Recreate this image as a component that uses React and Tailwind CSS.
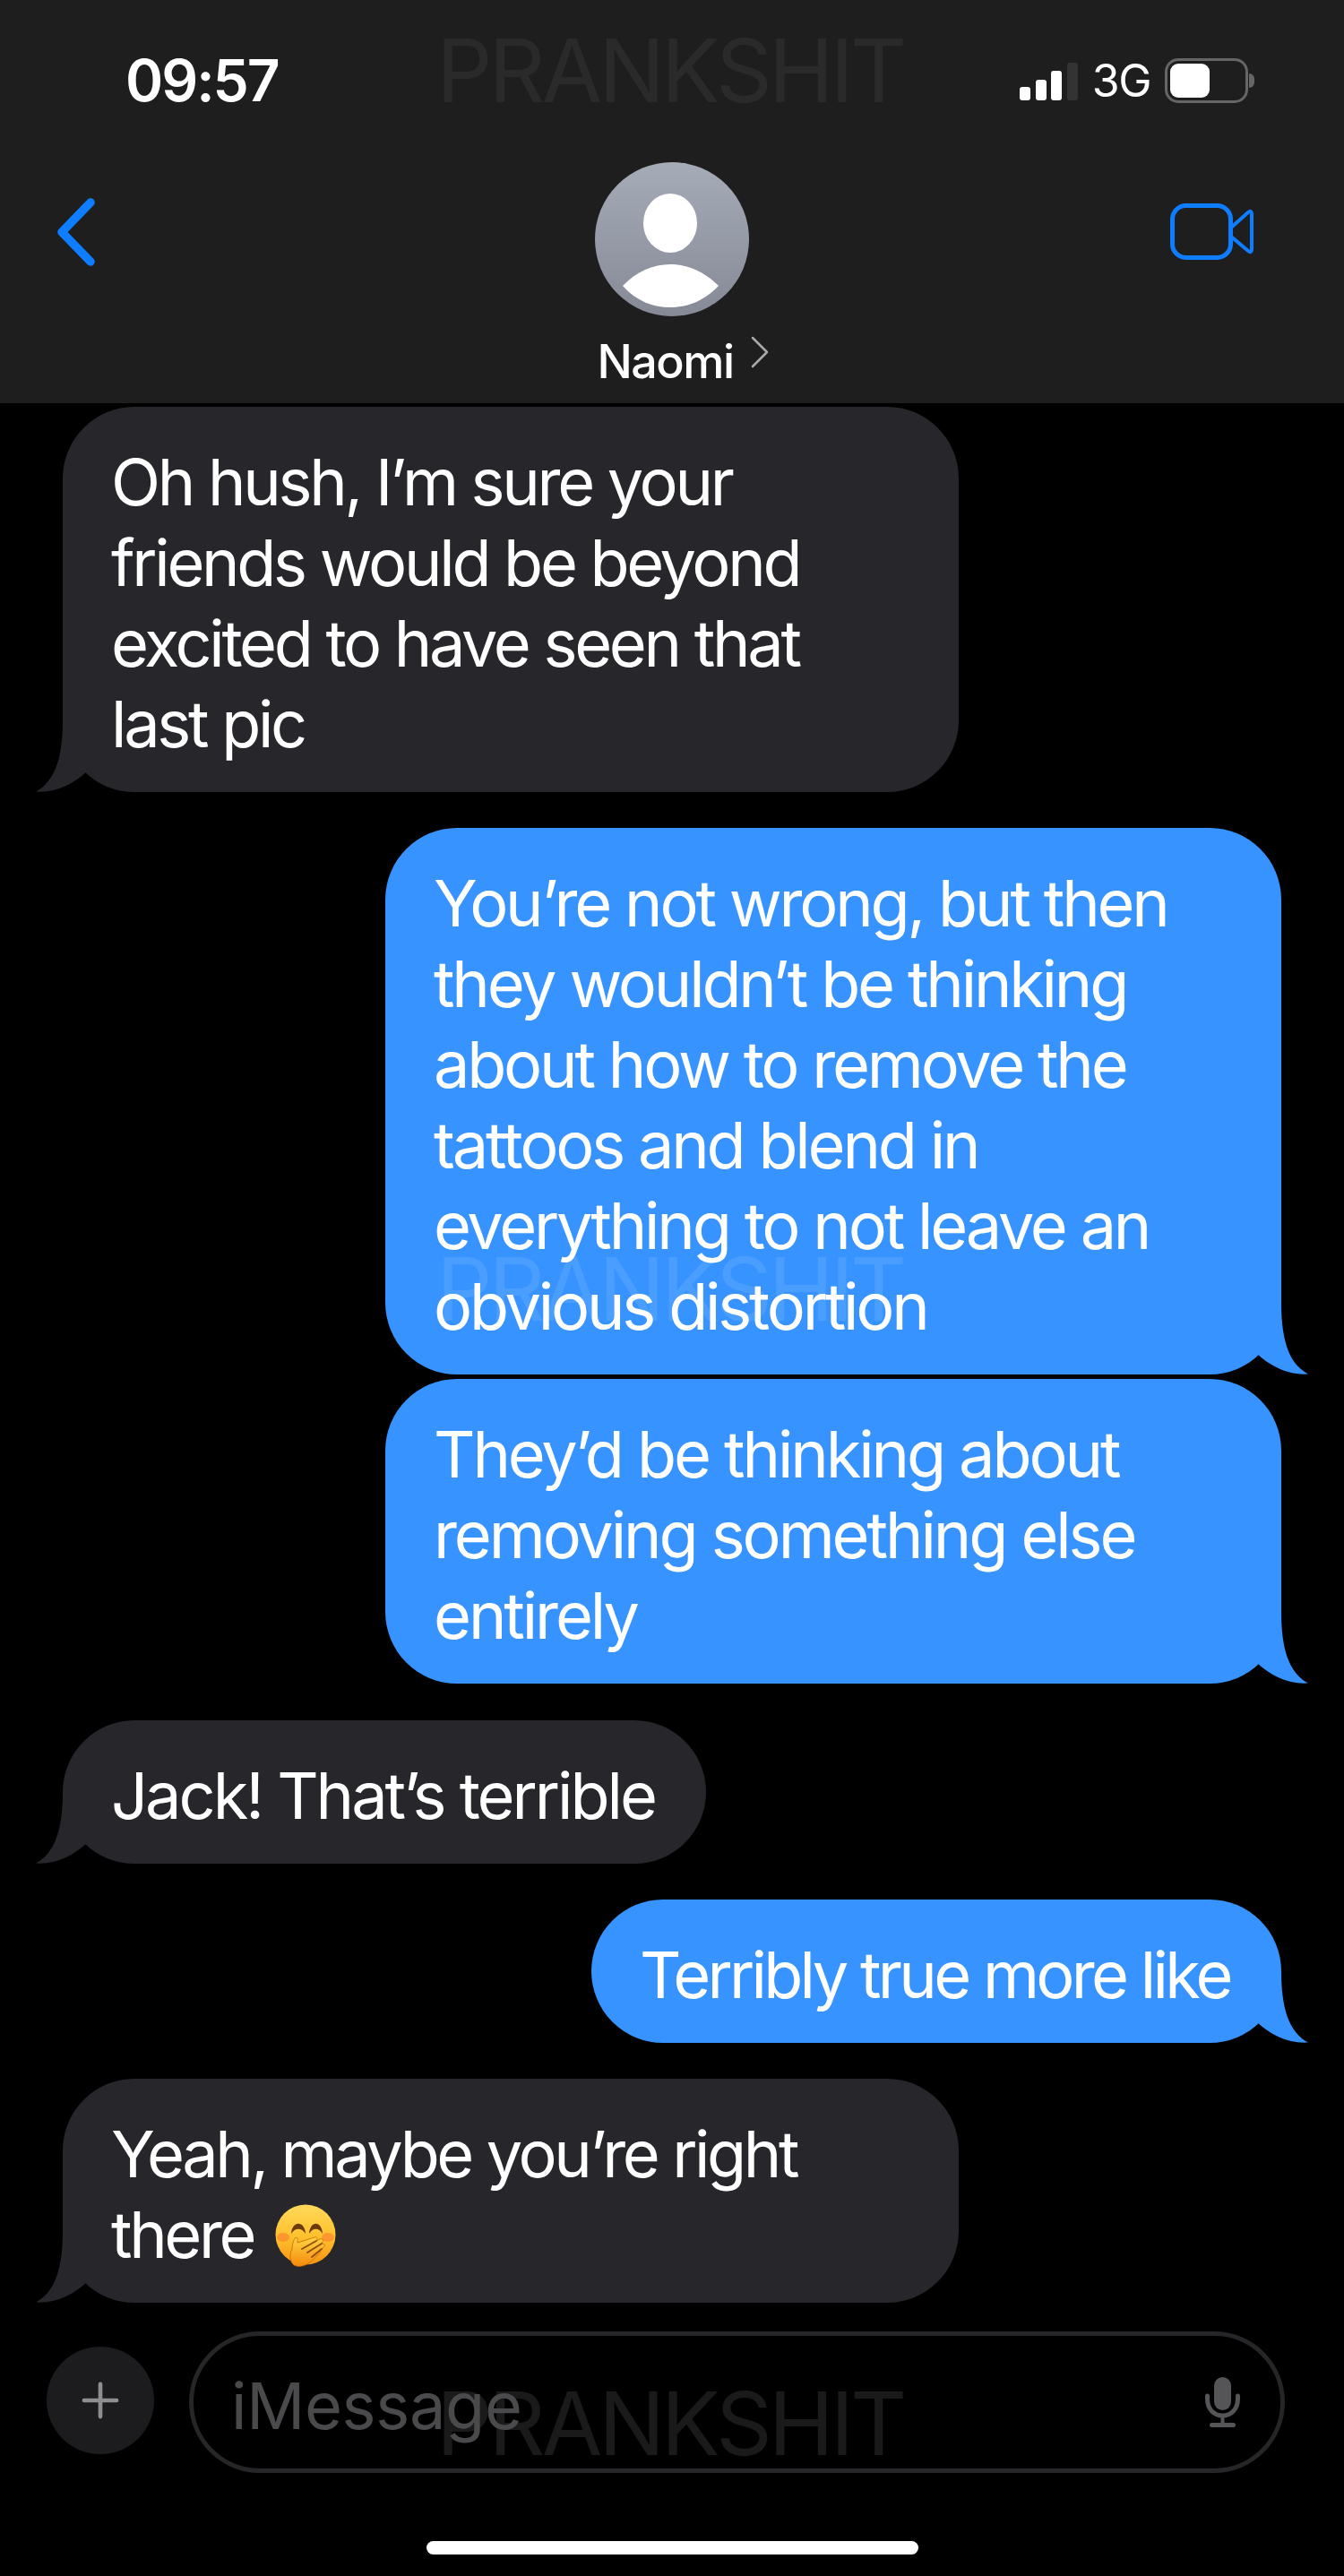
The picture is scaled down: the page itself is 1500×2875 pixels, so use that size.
import React from 'react';
import { Plus } from 'lucide-react';

const messages = [
  { id: 1, mine: false, width: 'w-[1000px]', margin: 'mt-[4px]', tracking: 'tracking-[-3.3px]', lines: ['Oh hush, I’m sure your', 'friends would be beyond', 'excited to have seen that', 'last pic'] },
  { id: 2, mine: true, width: 'w-[1000px]', margin: 'mt-[40px]', tracking: 'tracking-[-3.2px]', mark: true, lines: ['You’re not wrong, but then', 'they wouldn’t be thinking', 'about how to remove the', 'tattoos and blend in', 'everything to not leave an', 'obvious distortion'] },
  { id: 3, mine: true, width: 'w-[1000px]', margin: 'mt-[5px]', tracking: 'tracking-[-3.1px]', lines: ['They’d be thinking about', 'removing something else', 'entirely'] },
  { id: 4, mine: false, width: 'w-[718px]', margin: 'mt-[41px]', tracking: 'tracking-[-3px]', lines: ['Jack! That’s terrible'] },
  { id: 5, mine: true, width: 'w-[770px]', margin: 'mt-[40px]', tracking: 'tracking-[-3.7px]', lines: ['Terribly true more like'] },
  { id: 6, mine: false, width: 'w-[1000px]', margin: 'mt-[40px]', tracking: 'tracking-[-3.4px]', emoji: true, lines: ['Yeah, maybe you’re right', 'there'] },
];

// Faint stamp that sits over the header, one bubble and the composer
const Stamp = ({ className }) => (
  <div className={`absolute text-[98px] leading-[98px] font-normal tracking-[-4px] whitespace-nowrap ${className}`}>
    PRANKSHIT
  </div>
);

const BubbleTail = ({ mine }) => (
  <svg
    viewBox="0 0 60 90"
    className={mine ? 'absolute bottom-0 -right-[30px] w-[60px] h-[90px] -scale-x-100' : 'absolute bottom-0 -left-[30px] w-[60px] h-[90px]'}
  >
    <path
      d="M30 10 C30 50 22 78 0 89.5 C22 91 42 81 57 67 L60 10 Z"
      fill={mine ? '#3693ff' : '#26262b'}
    />
  </svg>
);

const HandOverMouthEmoji = () => (
  <svg viewBox="0 0 68 70" className="inline-block w-[68px] h-[70px] ml-[24px] align-[-10px]">
    <defs>
      <linearGradient id="face" x1="0" y1="0" x2="0" y2="1">
        <stop offset="0%" stopColor="#ffd95a" />
        <stop offset="55%" stopColor="#ffc02c" />
        <stop offset="100%" stopColor="#f79412" />
      </linearGradient>
      <linearGradient id="hand" x1="0" y1="0" x2="0" y2="1">
        <stop offset="0%" stopColor="#ffd443" />
        <stop offset="100%" stopColor="#f58a0c" />
      </linearGradient>
    </defs>
    <circle cx="34" cy="34" r="33.5" fill="url(#face)" />
    <ellipse cx="9" cy="37" rx="7" ry="5" fill="#ff7a30" opacity="0.6" />
    <ellipse cx="59" cy="37" rx="7" ry="5" fill="#ff7a30" opacity="0.6" />
    <path d="M18 33 C19 18 33 18 34 33 C30 26 22 26 18 33 Z" fill="#6b3a08" />
    <path d="M38 33 C39 18 52 18 53 33 C49 26 42 26 38 33 Z" fill="#6b3a08" />
    <path
      d="M22 38 C24 36 26 38 25 43 L44 37 C47 36 48 39 46 41 L50 39 C54 38 55 41 52 43 L53 44 C56 44 56 47 53 49 L50 52 C51 54 49 56 46 58 C40 67 28 72 21 68 C16 64 16 56 19 50 C19 46 20 42 22 38 Z"
      fill="url(#hand)"
      stroke="#c46a08"
      strokeWidth="0.8"
    />
    <path d="M30 50 L46 41 M36 54 L52 44 M41 59 L52 50" stroke="#8f4c06" strokeWidth="1.8" fill="none" strokeLinecap="round" />
  </svg>
);

const StatusBar = () => (
  <div className="flex items-center justify-between h-[50px] pl-[140px] pr-[100px] mt-[65px]">
    <span className="text-[64px] leading-[50px] font-semibold text-white tracking-[-2px]">09:57</span>
    <div className="flex items-center gap-[16px]">
      <svg viewBox="0 0 65 42" className="w-[65px] h-[42px] mt-[2px]">
        <rect x="0" y="27" width="12" height="15" rx="3" fill="#fff" />
        <rect x="18" y="19" width="12" height="23" rx="3" fill="#fff" />
        <rect x="35" y="9" width="12" height="33" rx="3" fill="#fff" />
        <rect x="53" y="0" width="12" height="42" rx="3" fill="#333" />
      </svg>
      <span className="text-[50px] leading-[50px] text-white tracking-[-1.5px]">3G</span>
      <div className="flex items-center">
        <div className="w-[93px] h-[50px] border-[3px] border-[#666] rounded-[15px] p-[3px]">
          <div className="w-[44px] h-full bg-white rounded-[9px]" />
        </div>
        <div className="w-[6px] h-[16px] bg-[#666] rounded-r-full ml-[1px]" />
      </div>
    </div>
  </div>
);

const ChatHeader = () => (
  <header className="h-[450px] bg-[#1e1e1e] flex flex-col overflow-hidden">
    <StatusBar />
    <div className="grid grid-cols-[1fr_auto_1fr] px-[100px] mt-[66px]">
      <svg viewBox="0 0 44 78" className="w-[44px] h-[78px] mt-[39px] -ml-[37px]">
        <path d="M38 6 L6 39 L38 72" fill="none" stroke="#0f7dff" strokeWidth="9.5" strokeLinecap="round" strokeLinejoin="round" />
      </svg>
      <div className="flex flex-col items-center">
        <svg viewBox="0 0 172 172" className="w-[172px] h-[172px]">
          <defs>
            <linearGradient id="avatar" x1="0" y1="0" x2="0" y2="1">
              <stop offset="0%" stopColor="#a6abb8" />
              <stop offset="100%" stopColor="#858a96" />
            </linearGradient>
          </defs>
          <circle cx="86" cy="86" r="86" fill="url(#avatar)" />
          <ellipse cx="84" cy="68" rx="30" ry="33" fill="#fff" />
          <path d="M31 138 C46 122 65 114 84 114 C103 114 122 122 138 138 C122 155 103 162 84 162 C65 162 46 155 31 138 Z" fill="#fff" />
        </svg>
        <div className="flex items-start mt-[20px] ml-[24px]">
          <span className="text-[52px] leading-[62px] font-[450] text-white tracking-[-1.5px]">Naomi</span>
          <svg viewBox="0 0 20 36" className="w-[20px] h-[36px] ml-[19px] mt-[2px]">
            <path d="M2 2 L18 18 L2 34" fill="none" stroke="#aaa" strokeWidth="2.5" strokeLinecap="round" strokeLinejoin="round" />
          </svg>
        </div>
      </div>
      <svg viewBox="0 0 94 64" className="w-[94px] h-[64px] mt-[46px] justify-self-end">
        <rect x="2.5" y="2.5" width="65" height="58" rx="15" fill="none" stroke="#0f7dff" strokeWidth="5" />
        <path d="M68 27 L87 10 Q91 7 91 12 L91 51 Q91 56 87 53 L68 37" fill="none" stroke="#0f7dff" strokeWidth="4" strokeLinejoin="round" strokeLinecap="round" />
      </svg>
    </div>
  </header>
);

const Bubble = ({ message }) => (
  <div
    className={`relative ${message.width} ${message.margin} ${message.mine ? 'ml-auto mr-[70px] bg-[#3693ff]' : 'ml-[70px] bg-[#26262b]'} rounded-[80px] pl-[54px] pr-[40px] pt-[39px] pb-[31px]`}
  >
    <BubbleTail mine={message.mine} />
    {message.mark && <Stamp className="left-[57px] top-[466px] text-[#4a9eff]" />}
    <div className={`relative text-[72px] leading-[90px] text-white whitespace-nowrap ${message.tracking}`}>
      {message.lines.map((line, i) => (
        <div key={i}>
          {line}
          {message.emoji && i === message.lines.length - 1 && <HandOverMouthEmoji />}
        </div>
      ))}
    </div>
  </div>
);

const Composer = () => (
  <div className="flex items-center mt-[32px] pl-[52px]">
    <div className="w-[120px] h-[120px] mb-[4px] rounded-full bg-[#1c1c1e] flex items-center justify-center">
      <Plus className="w-[62px] h-[62px] text-[#8e8e90]" strokeWidth={1.8} />
    </div>
    <div className="relative w-[1223px] h-[158px] ml-[39px] border-[5px] border-[#262628] rounded-[79px] flex items-center justify-between pl-[42px] pr-[44px]">
      <Stamp className="left-[271px] top-[49px] text-[#1a1a1a]" />
      <span className="relative text-[72px] leading-[90px] text-[#4a4a4c] tracking-[-0.3px] mt-[8px]">iMessage</span>
      <svg viewBox="0 0 41 58" className="relative w-[41px] h-[58px]">
        <rect x="11" y="1" width="19" height="37" rx="9.5" fill="#555558" />
        <path d="M3.5 22 L3.5 25 C3.5 37 11 44 20.5 44 C30 44 37.5 37 37.5 25 L37.5 22" fill="none" stroke="#555558" strokeWidth="5" strokeLinecap="round" />
        <path d="M20.5 44 L20.5 53" stroke="#555558" strokeWidth="4" />
        <rect x="6" y="52" width="29" height="5" rx="2.5" fill="#555558" />
      </svg>
    </div>
  </div>
);

export default function App() {
  return (
    <div
      className="relative w-[1500px] h-[2875px] bg-black overflow-hidden"
      style={{ fontFamily: 'Inter, "Liberation Sans", sans-serif' }}
    >
      <ChatHeader />
      <Stamp className="left-[487px] top-[30px] text-[#2a2a2a]" />
      <main className="flex flex-col">
        {messages.map(message => (
          <Bubble key={message.id} message={message} />
        ))}
      </main>
      <Composer />
      <div className="w-[549px] h-[15px] bg-white rounded-full mx-auto mt-[76px]" />
    </div>
  );
}
